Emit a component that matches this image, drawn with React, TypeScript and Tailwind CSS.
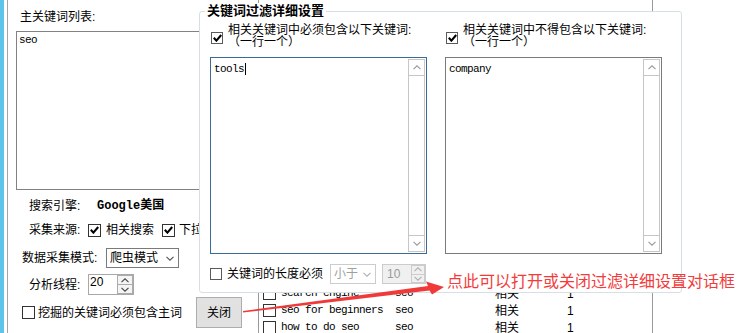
import React from 'react';

// Small chevron used by spin buttons, selects and scrollbars
function Chevron({ dir = 'down', color = '#8a8a8a' }: { dir?: 'up' | 'down'; color?: string }) {
    return (
        <svg width="8" height="5" viewBox="0 0 8 5">
            <path
                d={dir === 'down' ? 'M0.5 0.8 L4 4.2 L7.5 0.8' : 'M0.5 4.2 L4 0.8 L7.5 4.2'}
                fill="none"
                stroke={color}
                strokeWidth="1.1"
            />
        </svg>
    );
}

function Box({ checked = false, small = false }: { checked?: boolean; small?: boolean }) {
    return (
        <span
            className={
                small
                    ? 'flex shrink-0 items-center justify-center w-[12px] h-[12px] bg-white border border-[#5a5a5a]'
                    : 'flex shrink-0 items-center justify-center w-[13px] h-[13px] bg-white border border-[#333333]'
            }
        >
            {checked && (
                <svg width="9" height="8" viewBox="0 0 9 8">
                    <path d="M0.8 3.8 L3.4 6.6 L8.2 1" fill="none" stroke="#000" strokeWidth="2.1" />
                </svg>
            )}
        </span>
    );
}

// Multi-line edit box with a classic scrollbar on its right
function EditBox({ text, focused = false }: { text: string; focused?: boolean }) {
    return (
        <div
            className={`mt-[9px] flex h-[197px] w-[217px] p-px bg-white border ${
                focused ? 'border-[#3b6b95]' : 'border-[#7a7a7a]'
            }`}
        >
            <div className="flex-1 pl-[2px] pt-[4px] font-['Liberation_Mono',monospace] text-[11px] tracking-[-0.6px] leading-[12px]">
                {text}
                {focused && <span className="inline-block ml-px w-px h-[12px] align-top bg-black" />}
            </div>
            <div className="flex flex-col w-[17px] border border-[#c6c6c6]">
                <div className="flex h-[16px] items-center justify-center border-b border-[#c6c6c6]">
                    <Chevron dir="up" color="#9a9a9a" />
                </div>
                <div className="flex-1" />
                <div className="flex h-[16px] items-center justify-center border-t border-[#c6c6c6]">
                    <Chevron dir="down" color="#9a9a9a" />
                </div>
            </div>
        </div>
    );
}

function FilterColumn({ label, text, focused }: { label: string; text: string; focused?: boolean }) {
    return (
        <div className="flex flex-col w-[217px]">
            <div className="flex items-start h-[24px]">
                <span className="mt-[8px] ml-px">
                    <Box checked small />
                </span>
                <div className="ml-[5px] leading-[12px]">
                    <div>{label}</div>
                    <div>（一行一个）</div>
                </div>
            </div>
            <EditBox text={text} focused={focused} />
        </div>
    );
}

const rows = [
    { kw: 'search engine', main: 'seo' },
    { kw: 'seo for beginners', main: 'seo' },
    { kw: 'how to do seo', main: 'seo' },
];

export default function App() {
    return (
        <div className="relative flex w-[753px] h-[333px] overflow-hidden bg-white text-black text-[12px] font-['Liberation_Sans','Noto_Sans_CJK_SC',sans-serif]">
            {/* window edge */}
            <div className="w-[4px] bg-[#5ec4ea]" />
            <div className="w-[3px]" />
            <div className="w-px bg-[#a5a5a5]" />

            <div className="flex flex-1 flex-col">
                <div className="h-px ml-[75px] bg-[#8c8c8c]" />
                <div className="flex flex-1">
                    {/* Left settings panel */}
                    <div className="flex flex-col w-[250px]">
                        <div className="mt-[9px] ml-[12px] leading-[16px]">主关键词列表:</div>
                        <div className="mt-[6px] ml-[8px] w-[234px] h-[159px] border border-[#828282] pl-[2px] pt-[2px] font-['Liberation_Mono',monospace] text-[11px] tracking-[-0.6px] leading-[12px]">
                            seo
                        </div>

                        <div className="flex items-center h-[16px] mt-[8px] ml-[21px]">
                            <span className="w-[68px]">搜索引擎:</span>
                            <span className="font-bold font-['Liberation_Mono','Noto_Sans_CJK_SC',monospace]">Google美国</span>
                        </div>

                        <div className="flex items-center h-[16px] mt-[8px] ml-[21px]">
                            <span className="w-[59px]">采集来源:</span>
                            <Box checked />
                            <span className="ml-[5px]">相关搜索</span>
                            <span className="ml-[8px]">
                                <Box checked />
                            </span>
                            <span className="ml-[4px] whitespace-nowrap">下拉框</span>
                        </div>

                        <div className="flex items-center h-[20px] mt-[10px] ml-[14px]">
                            <span className="w-[84px]">数据采集模式:</span>
                            <div className="flex items-center justify-between w-[73px] h-[20px] pl-[3px] pr-[4px] border border-[#7a7a7a]">
                                <span>爬虫模式</span>
                                <Chevron color="#555555" />
                            </div>
                        </div>

                        <div className="flex items-center h-[21px] mt-[6px] ml-[21px]">
                            <span className="w-[59px]">分析线程:</span>
                            <div className="flex w-[46px] h-[21px] border border-[#a8a8a8]">
                                <span className="flex-1 pl-px leading-[14px]">20</span>
                                <div className="flex flex-col w-[16px]">
                                    <div className="flex flex-1 items-center justify-center border border-[#acacac] bg-[#f4f4f4]">
                                        <Chevron dir="up" color="#444444" />
                                    </div>
                                    <div className="flex flex-1 items-center justify-center border border-t-0 border-[#acacac] bg-[#f4f4f4]">
                                        <Chevron color="#444444" />
                                    </div>
                                </div>
                            </div>
                        </div>

                        <div className="flex items-center h-[31px] mt-[2px] ml-[14px]">
                            <Box />
                            <span className="ml-[3px] w-[158px]">挖掘的关键词必须包含主词</span>
                            <button className="flex items-center justify-center w-[46px] h-[31px] bg-[#e1e1e1] border border-[#adadad]">
                                关闭
                            </button>
                        </div>
                    </div>

                    {/* Result list (mostly hidden behind the dialog) */}
                    <div className="flex flex-col w-[395px] pt-[285px] border-x border-[#9a9a9a]">
                        {rows.map((r) => (
                            <div key={r.kw} className="flex items-center h-[17px]">
                                <span className="ml-[4px]">
                                    <Box />
                                </span>
                                <span className="ml-[5px] w-[114px] font-['Liberation_Mono',monospace] text-[11px] tracking-[-0.6px]">
                                    {r.kw}
                                </span>
                                <span className="w-[100px] font-['Liberation_Mono',monospace] text-[11px] tracking-[-0.6px]">
                                    {r.main}
                                </span>
                                <span className="w-[72px]">相关</span>
                                <span>1</span>
                            </div>
                        ))}
                    </div>
                </div>
            </div>

            {/* Filter detail dialog */}
            <div className="absolute left-[199px] top-[11px] w-[483px] h-[282px] bg-white border border-[#d6dfe6] rounded-[3px]">
                <div className="absolute left-[5px] -top-[9px] px-[2px] bg-white font-bold text-[13px] leading-[16px]">
                    关键词过滤详细设置
                </div>
                <div className="flex gap-[18px] pl-[10px] pt-[12px]">
                    <FilterColumn label="相关关键词中必须包含以下关键词:" text="tools" focused />
                    <FilterColumn label="相关关键词中不得包含以下关键词:" text="company" />
                </div>
                <div className="flex items-center h-[20px] mt-[10px] pl-[10px]">
                    <Box small />
                    <span className="ml-[5px] w-[103px]">关键词的长度必须</span>
                    <div className="flex items-center justify-between w-[46px] h-[20px] pl-[3px] pr-[4px] border border-[#cccccc] text-[#a0a0a0]">
                        <span>小于</span>
                        <Chevron color="#b0b0b0" />
                    </div>
                    <div className="flex ml-[6px] w-[44px] h-[20px] border border-[#cccccc] bg-[#f0f0f0] text-[#9a9a9a]">
                        <span className="flex-1 pl-[4px] leading-[18px]">10</span>
                        <div className="flex flex-col w-[14px]">
                            <div className="flex flex-1 items-center justify-center border border-[#cccccc]">
                                <Chevron dir="up" color="#b0b0b0" />
                            </div>
                            <div className="flex flex-1 items-center justify-center border border-t-0 border-[#cccccc]">
                                <Chevron color="#b0b0b0" />
                            </div>
                        </div>
                    </div>
                </div>
            </div>

            {/* Annotation arrow */}
            <svg className="absolute left-0 top-0 pointer-events-none" width="753" height="333" viewBox="0 0 753 333">
                <polygon
                    points="243,311 428,286 426,281.5 444,287 432,294.5 429.5,290.5 243,312.6"
                    fill="#f03a3a"
                />
            </svg>
            <div className="absolute left-[447px] top-[270px] text-[16px] leading-[20px] text-[#f23c3c] font-['Noto_Sans_CJK_SC',sans-serif] whitespace-nowrap">
                点此可以打开或关闭过滤详细设置对话框
            </div>
        </div>
    );
}
